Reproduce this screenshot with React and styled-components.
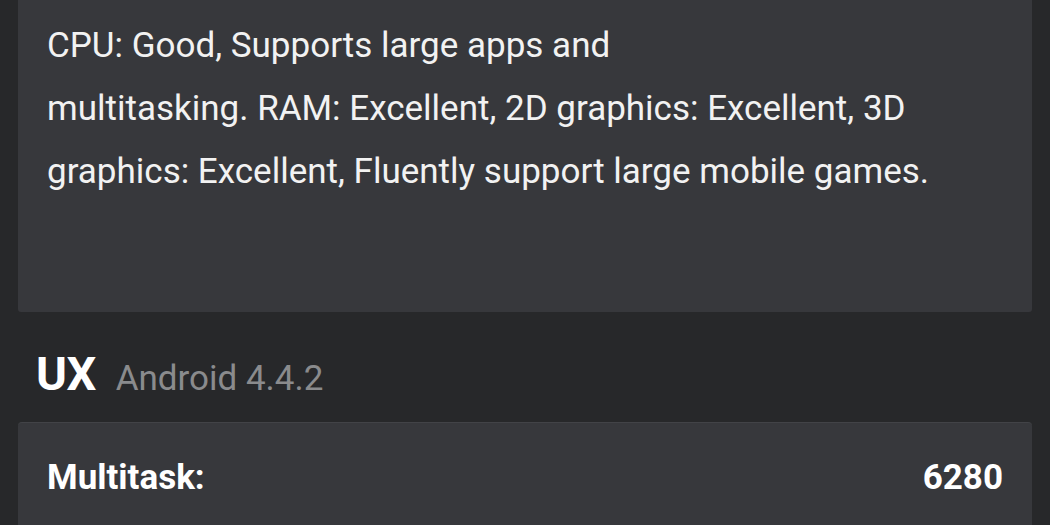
import React from 'react'
import styled, { createGlobalStyle } from 'styled-components'

const GlobalStyle = createGlobalStyle`
	html, body {
		margin: 0;
		padding: 0;
		background: #27282a;
		font-family: Roboto, "Noto Sans", sans-serif;
		-webkit-font-smoothing: antialiased;
	}
`

const Page = styled.div`
	width: 1050px;
	height: 525px;
	overflow: hidden;
	background: #27282a;
	padding: 0 18px;
	box-sizing: border-box;
`

const Card = styled.div`
	background: #37383c;
	border-radius: ${p => (p.$flatTop ? '0 0 3px 3px' : '4px')};
	border-top: ${p => (p.$flatTop ? 'none' : '1px solid #424347')};
	padding: ${p => p.$pad};
	box-sizing: border-box;
`

const Description = styled.p`
	margin: 0;
	color: #f2f2f2;
	font-size: 35px;
	line-height: 63px;
`

const SectionHead = styled.div`
	display: flex;
	align-items: baseline;
	gap: 20px;
	height: 110px;
	padding: 0 0 0 18px;
	box-sizing: border-box;
	line-height: 124px;
`

const SectionTitle = styled.span`
	color: #ffffff;
	font-size: 47px;
	font-weight: 700;
	letter-spacing: -0.6px;
`

const SectionSub = styled.span`
	color: #8a8b8d;
	font-size: 35px;
`

const ScoreRow = styled.div`
	display: flex;
	justify-content: space-between;
	align-items: center;
	color: #ffffff;
	font-size: 35px;
	font-weight: 700;
	height: 109px;
`

const App = () => (
	<>
		<GlobalStyle />
		<Page>
			<Card $flatTop $pad="14px 29px 109px">
				<Description>
					CPU: Good, Supports large apps and
					<br />
					multitasking. RAM: Excellent, 2D graphics: Excellent, 3D graphics: Excellent, Fluently support large mobile games.
				</Description>
			</Card>
			<SectionHead>
				<SectionTitle>UX</SectionTitle>
				<SectionSub>Android 4.4.2</SectionSub>
			</SectionHead>
			<Card $pad="0 29px">
				<ScoreRow>
					<span>Multitask:</span>
					<span>6280</span>
				</ScoreRow>
			</Card>
		</Page>
	</>
)

export default App
